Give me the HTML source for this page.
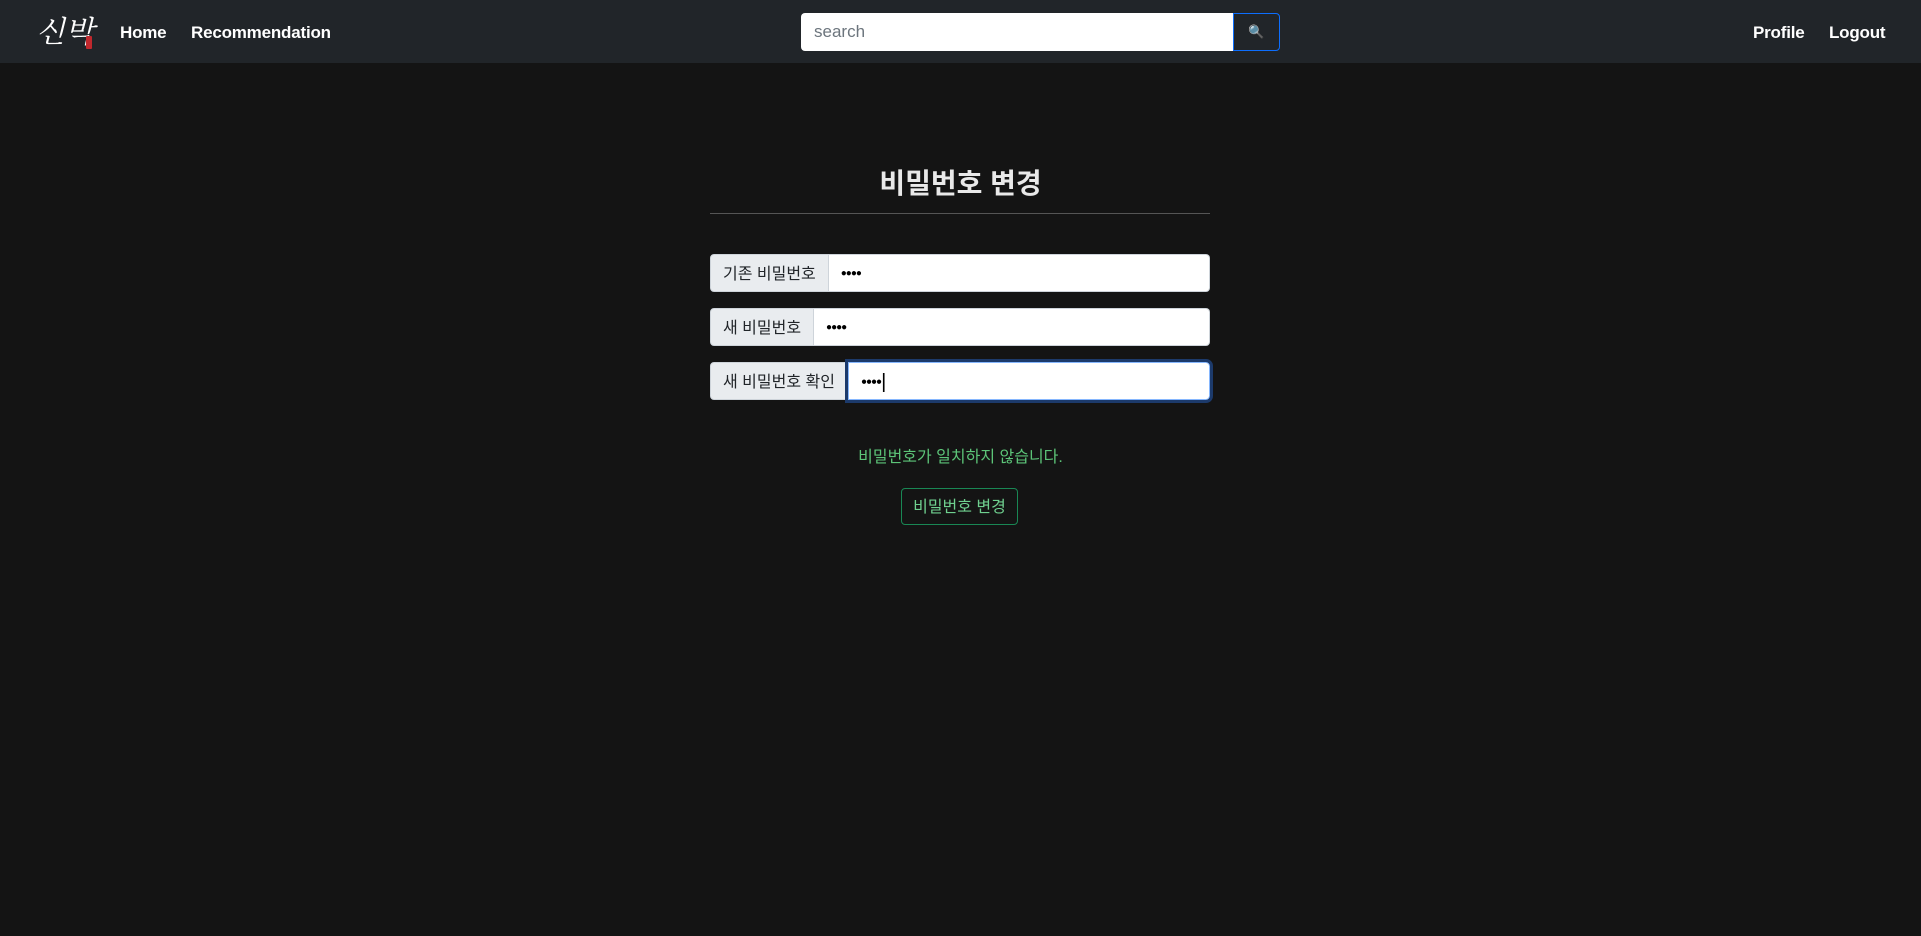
<!DOCTYPE html>
<html><head><meta charset="utf-8"><style>
*{box-sizing:border-box;margin:0;padding:0}
body{width:1921px;height:936px;background:#141414;font-family:"Liberation Sans","Noto Sans CJK KR",sans-serif;overflow:hidden;position:relative}
nav{position:absolute;left:0;top:0;width:1921px;height:63px;background:#212529}
.logo{position:absolute;left:36px;top:11px;color:#fff;font-family:"Noto Serif CJK SC","Noto Sans CJK KR",serif;font-size:30px;font-style:italic;line-height:36px}
.seal{position:absolute;left:86px;top:36px;width:6px;height:13px;background:#c0282d;border-radius:1px}
.nl{position:absolute;top:23px;color:#fff;font-weight:bold;font-size:17px;letter-spacing:-0.2px}
.search{position:absolute;left:801px;top:13px;width:432px;height:38px;background:#fff;border-radius:4px 0 0 4px;color:#6c757d;font-size:17px;padding:9px 13px}
.sbtn{position:absolute;left:1233px;top:13px;width:47px;height:38px;border:1px solid #0d6efd;border-radius:0 4px 4px 0;background:#212529;color:#9cf;font-size:13px;text-align:center;line-height:36px}
h2{position:absolute;left:0;width:1921px;top:162px;text-align:center;color:#e9e9e9;font-size:28px;font-weight:bold}
.hr{position:absolute;left:710px;top:213px;width:500px;height:1px;background:#555}
.row{position:absolute;left:710px;width:500px;height:38px;display:flex}
.lab{background:#e9ecef;border:1px solid #ced4da;border-radius:4px 0 0 4px;color:#212529;font-size:16px;padding:2px 12px 0;line-height:36px;white-space:nowrap}
.inp{flex:1;background:#fff;border:1px solid #ced4da;border-left:none;border-radius:0 4px 4px 0;font-size:10px;padding:1px 12px 0;line-height:36px;color:#000;letter-spacing:-1px}
.focus{outline:3px solid #1c3a6b;border:1px solid #86b7fe}
.msg{position:absolute;left:0;width:1921px;top:443px;text-align:center;color:#5cc478;font-size:16px}
.btn{position:absolute;left:901px;top:488px;width:117px;height:37px;border:1px solid #198754;border-radius:4px;color:#6fd08f;font-size:16px;text-align:center;line-height:37px}
</style></head><body>
<nav>
<div class="logo">신박</div><div class="seal"></div>
<div class="nl" style="left:120px">Home</div>
<div class="nl" style="left:191px">Recommendation</div>
<div class="search">search</div>
<div class="sbtn">🔍</div>
<div class="nl" style="left:1753px">Profile</div>
<div class="nl" style="left:1829px">Logout</div>
</nav>
<h2>비밀번호 변경</h2>
<div class="hr"></div>
<div class="row" style="top:254px"><div class="lab">기존 비밀번호</div><div class="inp">●●●●</div></div>
<div class="row" style="top:308px"><div class="lab">새 비밀번호</div><div class="inp">●●●●</div></div>
<div class="row" style="top:362px"><div class="lab">새 비밀번호 확인</div><div class="inp focus">●●●●<span style="font-size:20px;vertical-align:middle">|</span></div></div>
<div class="msg">비밀번호가 일치하지 않습니다.</div>
<div class="btn">비밀번호 변경</div>
</body></html>
